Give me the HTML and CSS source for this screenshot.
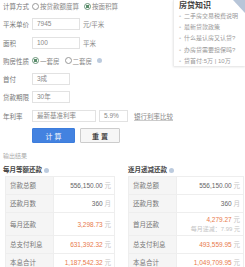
FILE: index.html
```html
<!DOCTYPE html>
<html lang="zh-CN">
<head>
    <meta charset="UTF-8">
    <meta name="viewport" content="width=device-width, initial-scale=1.0">
    <title>房贷计算器</title>
    <link rel="stylesheet" href="styles.css">
</head>
<body>

<div class="calc">
    <aside class="tips">
        <span class="fold"></span>
        <h4>房贷知识</h4>
        <ul>
            <li>二手房交易税费说明</li>
            <li>最新贷款政策</li>
            <li>什么是认房又认贷?</li>
            <li>办房贷需要担保吗?</li>
            <li>贷首付:5万 | 10万</li>
        </ul>
    </aside>

    <div class="row">
        <span class="label">计算方式</span>
        <span class="radio"><i></i>按贷款额度算</span>
        <span class="radio on"><i></i>按面积算</span>
    </div>
    <div class="row">
        <span class="label">平米单价</span>
        <span class="input mid">7945</span>
        <span class="unit">元/平米</span>
    </div>
    <div class="row">
        <span class="label">面积</span>
        <span class="input mid">100</span>
        <span class="unit">平米</span>
    </div>
    <div class="row">
        <span class="label">购房性质</span>
        <span class="radio on"><i></i>一套房</span>
        <span class="radio"><i></i>二套房</span>
        <span class="info"></span>
    </div>
    <div class="row">
        <span class="label">首付</span>
        <span class="input short">3成</span>
    </div>
    <div class="row">
        <span class="label">贷款期限</span>
        <span class="input short">30年</span>
    </div>
    <div class="row">
        <span class="label">年利率</span>
        <span class="input wide">最新基准利率</span>
        <span class="input rate">5.9%</span>
        <a class="link">银行利率比较</a>
    </div>
    <div class="actions">
        <button class="btn primary">计 算</button>
        <button class="btn">重 置</button>
    </div>
</div>

<div class="result">
    <p class="caption">输出结果</p>
    <div class="cols">
        <section class="plan first">
            <h3>每月等额还款 <span class="info"></span></h3>
            <table>
                <tr><td class="key">贷款总额</td><td><b>556,150.00</b> <em>元</em></td></tr>
                <tr><td class="key">还款月数</td><td><b>360</b> <em>月</em></td></tr>
                <tr class="tall"><td class="key">每月还款</td><td><b class="hot">3,298.73</b> <em>元</em></td></tr>
                <tr><td class="key">总支付利息</td><td><b class="hot">631,392.32</b> <em>元</em></td></tr>
                <tr><td class="key">本息合计</td><td><b class="hot">1,187,542.32</b> <em>元</em></td></tr>
            </table>
        </section>
        <section class="plan">
            <h3>逐月递减还款 <span class="info"></span></h3>
            <table>
                <tr><td class="key">贷款总额</td><td><b>556,150.00</b> <em>元</em></td></tr>
                <tr><td class="key">还款月数</td><td><b>360</b> <em>月</em></td></tr>
                <tr class="tall"><td class="key">首月还款</td><td><b class="hot">4,279.27</b> <em>元</em><br><span class="sub">每月递减：7.99 元</span></td></tr>
                <tr><td class="key">总支付利息</td><td><b class="hot">493,559.95</b> <em>元</em></td></tr>
                <tr><td class="key">本息合计</td><td><b class="hot">1,049,709.95</b> <em>元</em></td></tr>
            </table>
        </section>
    </div>
</div>

</body>
</html>
```

FILE: styles.css
```css
body {
    margin: 0;
    width: 245px;
    background-color: #fff;
    font-family: "Liberation Sans", "Noto Sans CJK SC", sans-serif;
    font-size: 6.5px;
    color: #777;
}

.calc {
    padding-left: 3px;
}

/* knowledge box on the right */
.tips {
    float: right;
    position: relative;
    width: 66px;
    height: 66px;
    padding-left: 5px;
    background-color: #fff;
    border-left: 1px solid #ececec;
    box-shadow: 0 1px 2px rgba(0, 0, 0, 0.12);
}

.tips h4 {
    margin: 0;
    padding-top: 1px;
    font-size: 8px;
    line-height: 10px;
    color: #444;
}

.tips ul {
    margin: 0;
    padding: 0;
    list-style: none;
}

.tips li {
    font-size: 6px;
    line-height: 11.2px;
    color: #999;
    white-space: nowrap;
}

.tips li::before {
    content: "•";
    color: #ccc;
    margin-right: 3px;
}

.fold {
    position: absolute;
    top: 0;
    right: 0;
    width: 0;
    height: 0;
    border-top: 13px solid #b7c5d8;
    border-left: 12px solid transparent;
}

.row {
    display: flex;
    align-items: center;
    height: 12px;
    margin-bottom: 6.3px;
    white-space: nowrap;
}

.label {
    width: 29px;
    color: #777;
}

.input {
    box-sizing: border-box;
    height: 12px;
    line-height: 10px;
    padding: 0 4px;
    border: 1px solid #e2e2e2;
    background-color: #fff;
    color: #888;
}

.input.mid { width: 48px; }
.input.short { width: 38px; }
.input.wide { width: 64px; }
.input.rate { width: 29px; margin-left: 3px; }

.unit {
    margin-left: 3px;
    color: #888;
}

.link {
    margin-left: 6px;
    color: #888;
    text-decoration: underline;
    text-decoration-color: #ccc;
}

.radio {
    display: flex;
    align-items: center;
    margin-right: 5px;
    color: #888;
}

.radio i {
    box-sizing: border-box;
    width: 7px;
    height: 7px;
    margin-right: 1px;
    border: 1px solid #999;
    border-radius: 50%;
}

.radio.on i {
    background: radial-gradient(circle, #5b8f6c 0 1.6px, #fff 2px);
    border-color: #6b957a;
}

.info {
    display: inline-block;
    width: 5px;
    height: 5px;
    border-radius: 50%;
    background-color: #bccbde;
    vertical-align: middle;
}

.actions {
    display: flex;
    gap: 5px;
    padding-left: 29px;
    margin-top: 6px;
}

.btn {
    height: 15px;
    padding: 0;
    font-family: inherit;
    font-size: 7px;
    border: 1px solid #ccc;
    border-radius: 1px;
    background-color: #f6f6f6;
    color: #444;
    font-weight: bold;
    width: 40px;
}

.btn.primary {
    width: 43px;
    border-color: #3d7ddc;
    background-color: #4382e0;
    color: #fff;
    font-weight: normal;
}

.caption {
    margin: 9px 0 0 3px;
    font-size: 6px;
    line-height: 8px;
    color: #aaa;
}

.cols {
    display: grid;
    grid-template-columns: 114px 116px;
    column-gap: 11px;
    padding-left: 3px;
    margin-top: 5px;
}

.plan h3 {
    margin: 0 0 2px;
    font-size: 6.5px;
    line-height: 9px;
    color: #444;
}

.plan table {
    width: 100%;
    border-collapse: collapse;
}

.plan.first table {
    width: 110px;
    margin-left: 2px;
}

.plan td {
    height: 17px;
    padding: 0 3px 0 4px;
    border: 1px solid #eee;
    text-align: right;
    color: #666;
    line-height: 9px;
}

.plan tr.tall td {
    height: 22px;
}

.plan td.key {
    width: 40px;
    text-align: left;
    background-color: #f5f5f5;
    color: #777;
}

.plan b {
    font-weight: normal;
}

.plan b.hot {
    color: #e8794a;
}

.plan em {
    font-style: normal;
    color: #c4c4c4;
}

.plan .sub {
    font-size: 6px;
    color: #c4c4c4;
}
```
